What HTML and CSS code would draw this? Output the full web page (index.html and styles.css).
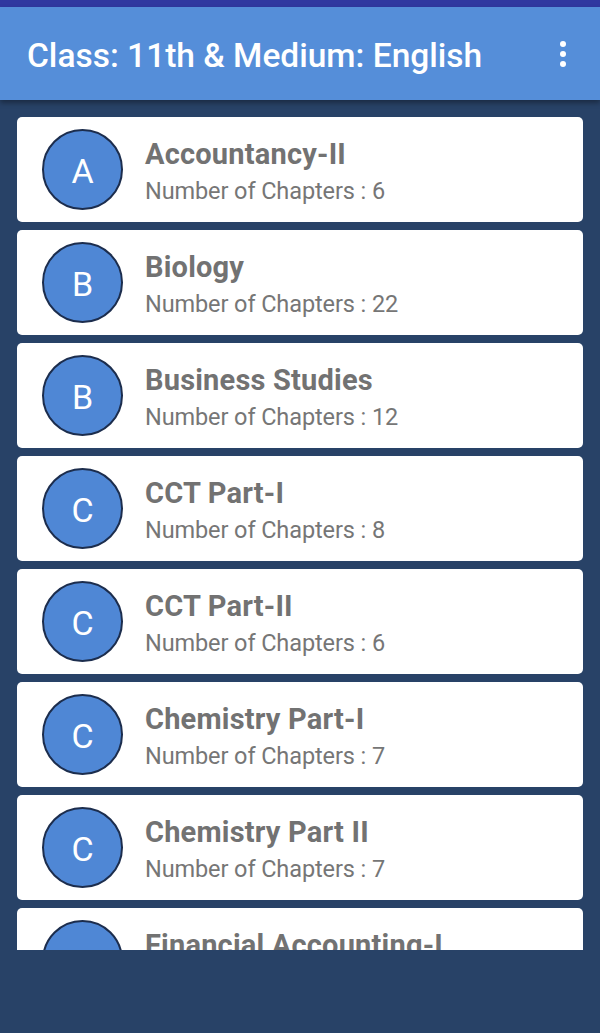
FILE: index.html
```html
<!DOCTYPE html>
<html>
<head>
<meta charset="utf-8">
<link rel="stylesheet" href="styles.css">
</head>
<body>
<div class="status"></div>
<header class="appbar">
  <h1 class="apptitle">Class: 11th &amp; Medium: English</h1>
  <div class="menu"><span></span><span></span><span></span></div>
</header>
<main class="list">
  <div class="card"><div class="avatar">A</div><div class="info"><div class="title">Accountancy-II</div><div class="sub">Number of Chapters : 6</div></div></div>
  <div class="card"><div class="avatar">B</div><div class="info"><div class="title">Biology</div><div class="sub">Number of Chapters : 22</div></div></div>
  <div class="card"><div class="avatar">B</div><div class="info"><div class="title">Business Studies</div><div class="sub">Number of Chapters : 12</div></div></div>
  <div class="card"><div class="avatar">C</div><div class="info"><div class="title">CCT Part-I</div><div class="sub">Number of Chapters : 8</div></div></div>
  <div class="card"><div class="avatar">C</div><div class="info"><div class="title">CCT Part-II</div><div class="sub">Number of Chapters : 6</div></div></div>
  <div class="card"><div class="avatar">C</div><div class="info"><div class="title">Chemistry Part-I</div><div class="sub">Number of Chapters : 7</div></div></div>
  <div class="card"><div class="avatar">C</div><div class="info"><div class="title">Chemistry Part II</div><div class="sub">Number of Chapters : 7</div></div></div>
  <div class="card"><div class="avatar">F</div><div class="info"><div class="title">Financial Accounting-I</div><div class="sub">Number of Chapters : 9</div></div></div>
</main>
<div class="bottom"></div>
</body>
</html>
```
FILE: styles.css
```css
html, body {
  margin: 0;
  padding: 0;
  height: 1033px;
  overflow: hidden;
  background: #284267;
  font-family: Roboto, "Liberation Sans", sans-serif;
}
.status {
  height: 7px;
  background: #3038a0;
}
.appbar {
  height: 93px;
  background: #558ed9;
  display: flex;
  align-items: center;
  justify-content: space-between;
  padding: 0 27px;
  box-sizing: border-box;
  box-shadow: 0 3px 5px rgba(0,0,0,0.35);
  position: relative;
  z-index: 1;
}
.apptitle {
  margin: 4px 0 0;
  color: #fff;
  font-size: 33.5px;
  line-height: 40px;
  font-weight: 500;
}
.menu {
  display: flex;
  flex-direction: column;
  gap: 4px;
  margin-right: 7px;
}
.menu span {
  width: 6px;
  height: 6px;
  border-radius: 50%;
  background: #fff;
}
.list {
  height: 850px;
  overflow: hidden;
  padding: 17px 17px 0;
  box-sizing: border-box;
  display: flex;
  flex-direction: column;
  gap: 8px;
}
.card {
  flex: none;
  height: 105px;
  background: #fff;
  border-radius: 5px;
  display: flex;
  align-items: center;
  padding-left: 25px;
  box-sizing: border-box;
  gap: 22px;
}
.avatar {
  width: 81px;
  height: 81px;
  border-radius: 50%;
  background: #4f87d5;
  border: 2px solid #1c2d4d;
  box-sizing: border-box;
  padding-top: 3px;
  color: #fff;
  font-size: 34px;
  display: flex;
  align-items: center;
  justify-content: center;
  flex: none;
}
.info {
  display: flex;
  flex-direction: column;
  margin-top: 3px;
}
.title {
  color: #727272;
  font-size: 29px;
  font-weight: 700;
  line-height: 34px;
  letter-spacing: 0.2px;
}
.sub {
  color: #767676;
  font-size: 23.5px;
  line-height: 30px;
  margin-top: 5px;
  letter-spacing: -0.1px;
}
.bottom {
  height: 83px;
  background: #284267;
}
```
